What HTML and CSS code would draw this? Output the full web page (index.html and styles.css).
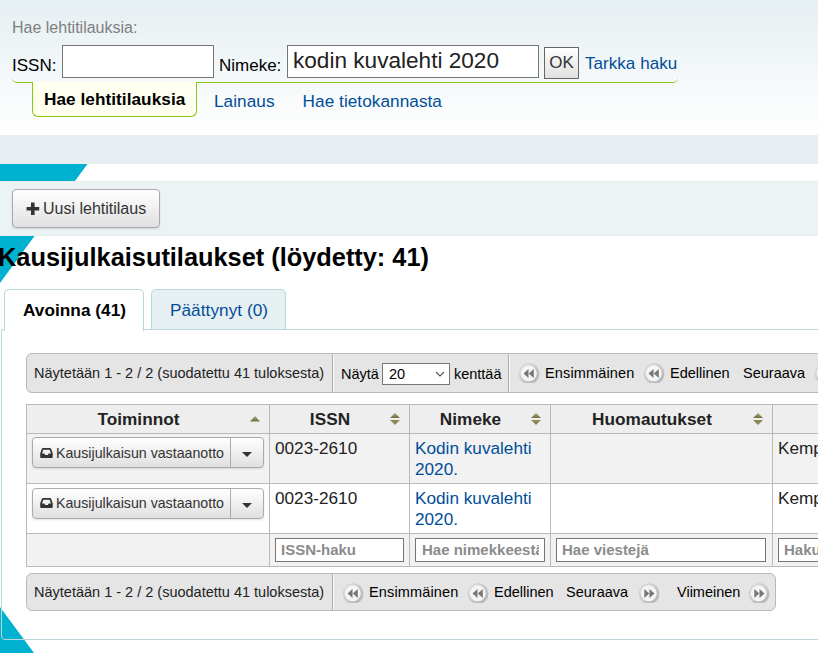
FILE: index.html
```
<!DOCTYPE html>
<html lang="fi">
<head>
<meta charset="utf-8">
<title>Kausijulkaisutilaukset</title>
<link rel="stylesheet" href="styles.css">
</head>
<body>
<svg class="defs" width="0" height="0" aria-hidden="true">
  <defs>
    <linearGradient id="disc" x1="0" y1="0" x2="1" y2="1"><stop offset="0" stop-color="#e2e2e2"/><stop offset="1" stop-color="#b0b0b0"/></linearGradient>
    <linearGradient id="olive" x1="0" y1="0" x2="0" y2="1"><stop offset="0" stop-color="#aaa77b"/><stop offset="1" stop-color="#706e3d"/></linearGradient>
    <symbol id="back" viewBox="0 0 22 20"><circle cx="11" cy="10.500" r="10.500" fill="url(#disc)"/><circle cx="10.700" cy="10.300" r="8" fill="#f5f5f5"/><path d="M10.500 6v9L5.500 10.500zM15.800 6v9l-5-4.500z" fill="#777"/></symbol>
    <symbol id="forward" viewBox="0 0 22 20"><circle cx="11" cy="10.500" r="10.500" fill="url(#disc)"/><circle cx="10.700" cy="10.300" r="8" fill="#f5f5f5"/><path d="M6.300 6v9l5-4.500zM11.500 6v9l5-4.500z" fill="#777"/></symbol>
    <symbol id="sort" viewBox="0 0 10 12"><path d="M5 0l5 5H0z" fill="url(#olive)"/><path d="M0 7h10l-5 5z" fill="#8b8859"/></symbol>
    <symbol id="sort-up" viewBox="0 0 10 6"><path d="M5 0l5 5.500H0z" fill="url(#olive)"/></symbol>
    <symbol id="inbox" viewBox="0 0 13 11"><path fill-rule="evenodd" d="M3 0h7q.8 0 1.100.8L12.700 5.300V9q0 1-1 1H1.200q-1 0-1-1V5.300L1.900.8Q2.200 0 3 0zM3.300 1.700L2 5.500h2.300L5.200 7h2.600l.9-1.500H11L9.600 1.700z" fill="#333"/></symbol>
  </defs>
</svg>
<svg class="backdrop" width="90" height="490" viewBox="0 0 90 490" aria-hidden="true"><path d="M0 0h87.500L0 119zM0 443l34 46H0z" fill="#00b1d0"/></svg>

<header class="search">
  <p class="search-title">Hae lehtitilauksia:</p>
  <form class="search-form">
    <label class="issn-label" for="issn">ISSN:</label>
    <input id="issn" class="field issn" type="text">
    <label class="title-label" for="title">Nimeke:</label>
    <input id="title" class="field title" type="text" value="kodin kuvalehti 2020">
    <button class="ok" type="button">OK</button>
    <a class="advanced">Tarkka haku</a>
  </form>
  <nav class="search-tabs">
    <a class="search-tab active">Hae lehtitilauksia</a>
    <a class="search-tab">Lainaus</a>
    <a class="search-tab">Hae tietokannasta</a>
  </nav>
</header>
<div class="crumbs"></div>

<div class="toolbar">
  <button class="btn new" type="button"><svg width="14" height="14" viewBox="0 0 14 14"><path d="M5 .5h3.600v4.400h4.600v3.600H8.600V13H5V8.500H.500V4.900H5z" fill="#333"/></svg><span>Uusi lehtitilaus</span></button>
</div>

<h1>Kausijulkaisutilaukset (löydetty: 41)</h1>
<nav class="tabs">
  <a class="tab current">Avoinna (41)</a>
  <a class="tab closed">Päättynyt (0)</a>
</nav>
<main class="panel">
  <div class="pager top">
    <div class="info">Näytetään 1 - 2 / 2 (suodatettu 41 tuloksesta)</div>
    <div class="length"><span>Näytä</span><span class="select">20<svg width="10" height="6" viewBox="0 0 10 6"><path d="M1 1l4 4 4-4" fill="none" stroke="#555" stroke-width="1.100"/></svg></span><span>kenttää</span></div>
    <div class="pages">
      <svg class="disc"><use href="#back"/></svg><span class="first">Ensimmäinen</span>
      <svg class="disc"><use href="#back"/></svg><span class="prev">Edellinen</span>
      <span class="next">Seuraava</span><svg class="disc"><use href="#forward"/></svg>
    </div>
  </div>

  <div class="grid">
    <div class="cell head">Toiminnot<svg class="up" width="10" height="6"><use href="#sort-up"/></svg></div>
    <div class="cell head">ISSN<svg width="10" height="12"><use href="#sort"/></svg></div>
    <div class="cell head">Nimeke<svg width="10" height="12"><use href="#sort"/></svg></div>
    <div class="cell head">Huomautukset<svg width="10" height="12"><use href="#sort"/></svg></div>
    <div class="cell head"></div>

    <div class="cell odd actions"><div class="btn split"><span class="receive"><svg width="13" height="11"><use href="#inbox"/></svg>Kausijulkaisun vastaanotto</span><span class="caret"></span></div></div>
    <div class="cell odd">0023-2610</div>
    <div class="cell odd"><a>Kodin kuvalehti 2020.</a></div>
    <div class="cell odd"></div>
    <div class="cell odd">Kempele</div>

    <div class="cell actions"><div class="btn split"><span class="receive"><svg width="13" height="11"><use href="#inbox"/></svg>Kausijulkaisun vastaanotto</span><span class="caret"></span></div></div>
    <div class="cell">0023-2610</div>
    <div class="cell"><a>Kodin kuvalehti 2020.</a></div>
    <div class="cell"></div>
    <div class="cell">Kempele</div>

    <div class="cell filter"></div>
    <div class="cell filter"><input type="text" placeholder="ISSN-haku"></div>
    <div class="cell filter"><input type="text" placeholder="Hae nimekkeestä"></div>
    <div class="cell filter wide"><input type="text" placeholder="Hae viestejä"></div>
    <div class="cell filter"><input type="text" placeholder="Haku kirjastosta"></div>
  </div>

  <div class="pager bottom">
    <div class="info">Näytetään 1 - 2 / 2 (suodatettu 41 tuloksesta)</div>
    <div class="pages">
      <svg class="disc"><use href="#back"/></svg><span class="first">Ensimmäinen</span>
      <svg class="disc"><use href="#back"/></svg><span class="prev">Edellinen</span>
      <span class="next">Seuraava</span><svg class="disc"><use href="#forward"/></svg>
      <span class="last">Viimeinen</span><svg class="disc"><use href="#forward"/></svg>
    </div>
  </div>
</main>
</body>
</html>
```
FILE: styles.css
```
* { box-sizing: border-box; }
html { overflow: hidden; }
body {
  margin: 0;
  height: 653px;
  position: relative;
  overflow: hidden;
  background: #fff;
  color: #000;
  font: 17.2px/21px "Liberation Sans", Arial, sans-serif;
  white-space: nowrap;
}
a { color: #004d99; }
svg { display: block; flex: none; }
input, button { font-family: inherit; margin: 0; }
.defs, .backdrop { position: absolute; left: 0; }
.backdrop { top: 164px; z-index: -1; }

.search {
  height: 135px;
  padding: 17px 0 0 12px;
  background: linear-gradient(#e6eff2, #fff);
}
.search-title { margin: 0; font-size: 16px; color: #7f7f7f; }
.search-form {
  display: flex;
  width: 666px;
  height: 45px;
  padding-top: 7px;
  border-bottom: 1px solid #85ca11;
  border-radius: 0 0 5px 5px;
  font-size: 17px;
}
.search-form label { padding-top: 10px; }
.issn-label { width: 50px; }
.title-label { width: 68px; }
.field {
  height: 33px;
  border: 1px solid #767676;
  padding: 0 5px 2px;
  background: #fff;
  color: #222;
  font-size: 22.600px;
}
.issn { width: 152px; margin-right: 5px; }
.title { width: 252px; margin-right: 5px; }
.ok {
  width: 35px;
  height: 32px;
  margin-top: 2px;
  padding: 0;
  border: 1px solid #666;
  background: linear-gradient(#fff, #e0e0e0);
  color: #333;
  font-size: 17px;
}
.advanced { margin: 8px 0 0 6px; letter-spacing: .05px; }
.search-tabs { display: flex; padding-left: 20px; margin-top: -1px; }
.search-tab { padding: 9px 0 0 17px; margin-right: 11px; letter-spacing: .05px; }
.search-tab.active {
  width: 165px;
  height: 35px;
  margin-right: 0;
  padding: 7px 0 0 11px;
  border: 1px solid #85ca11;
  border-top: 0;
  border-radius: 0 0 6px 6px;
  background: #fffff0;
  color: #000;
  font-weight: bold;
}
.crumbs { height: 29px; background: #e6eef1; }

.toolbar {
  height: 55px;
  margin-top: 17px;
  padding: 7px 12px;
  border: solid #e3edef;
  border-width: 1px 0;
  background: #ebf3f5;
}
.btn {
  display: flex;
  align-items: center;
  border: 1px solid #aaa;
  border-radius: 4px;
  background: linear-gradient(#fff, #e0e0e0);
  box-shadow: 0 1px 2px rgba(0, 0, 0, .12);
  color: #333;
}
.new { width: 148px; height: 39px; padding: 0 0 0 13px; gap: 3px; font-size: 16px; }

h1 { margin: 6px 0 0 -2px; font-size: 25.350px; line-height: 31px; }
.tabs { display: flex; gap: 7px; height: 41px; margin: 16px 0 -1px 4px; position: relative; z-index: 1; }
.tab {
  height: 41px;
  padding: 10px 0 0 18px;
  border: 1px solid #b9d8d9;
  border-radius: 5px 5px 0 0;
  letter-spacing: .05px;
}
.current { width: 140px; height: 42px; border-bottom: 0; background: #fff; color: #000; font-weight: bold; }
.closed { width: 135px; background: #e6f0f2; }

.panel {
  width: 900px;
  height: 311px;
  margin-left: 1px;
  padding: 23px 0 0 24px;
  border: 1px solid #b9d8d9;
  border-radius: 0 0 4px 4px;
}
.pager {
  display: flex;
  border: 1px solid #b9b9b9;
  border-radius: 6px;
  background: #e5e5e5;
  color: #222;
  font-size: 14.500px;
}
.pager > div { flex: none; border-right: 1px solid #adadad; display: flex; align-items: center; }
.pager > div + div { box-shadow: inset 1px 0 #f8f8f8; }
.pager > .pages { border-right: 0; color: #000; }
.top { width: 870px; height: 40px; }
.bottom { width: 750px; height: 38px; margin-top: 6px; }
.info { width: 306px; padding-left: 7px; }
.length { width: 176px; padding: 2px 0 0 8px; color: #000; }
.select {
  display: flex;
  align-items: center;
  justify-content: space-between;
  width: 68px;
  height: 22px;
  margin: 0 4px 0 3px;
  padding: 0 4px 0 6px;
  border: 1px solid #767676;
  background: #fff;
}
.pages { padding-left: 9px; }
.pages span { flex: none; }
.disc { width: 22px; height: 20px; }
.bottom .disc { margin-top: 2px; }
.first { width: 103px; padding-left: 5px; letter-spacing: .15px; }
.prev { width: 78px; padding-left: 5px; }
.bottom .prev { width: 77px; }
.next { width: 71px; }
.bottom .next { width: 72px; }
.last { width: 88px; padding-left: 17px; }

.grid {
  display: grid;
  grid-template-columns: 243px 140px 141px 222px 128px;
  grid-template-rows: 29px 50px 50px 34px;
  margin-top: 11px;
  border-left: 1px solid #b9b9b9;
  width: 875px;
}
.cell {
  border: solid #b9b9b9;
  border-width: 1px 1px 0 0;
  padding: 4px 5px;
  color: #222;
  background: #fff;
  white-space: normal;
  overflow: hidden;
}
.head {
  display: flex;
  align-items: center;
  justify-content: center;
  padding: 0 9px 0 0;
  background: #eee;
  font-weight: bold;
  letter-spacing: .05px;
}
.head svg { margin-left: auto; }
.head::before { content: ""; width: 0; margin-right: auto; }
.odd { background: #f2f2f2; }
.actions { padding: 3px 5px; }
.cell:nth-child(11) { padding-top: 4px; }
.split { width: 232px; height: 31px; font-size: 14.200px; white-space: nowrap; }
.receive { display: flex; align-items: center; gap: 3px; width: 198px; height: 29px; padding-left: 7px; border-right: 1px solid #aaa; }
.odd .receive { padding-top: 2px; }
.caret { width: 0; height: 0; margin: 3px 0 0 11px; border: 5px solid transparent; border-top-color: #333; border-bottom: 0; }
.filter { background: #f2f2f2; border-bottom-width: 1px; }
.filter input {
  display: block;
  width: 129px;
  height: 24px;
  padding: 0 5px 2px;
  border: 1px solid #767676;
  background: #fff;
  font-size: 15px;
  font-weight: bold;
}
.filter:nth-child(18) input { width: 130px; padding-left: 6px; }
.wide input { width: 210px; }
.filter input::placeholder { color: #8b8b8b; opacity: 1; }
```
